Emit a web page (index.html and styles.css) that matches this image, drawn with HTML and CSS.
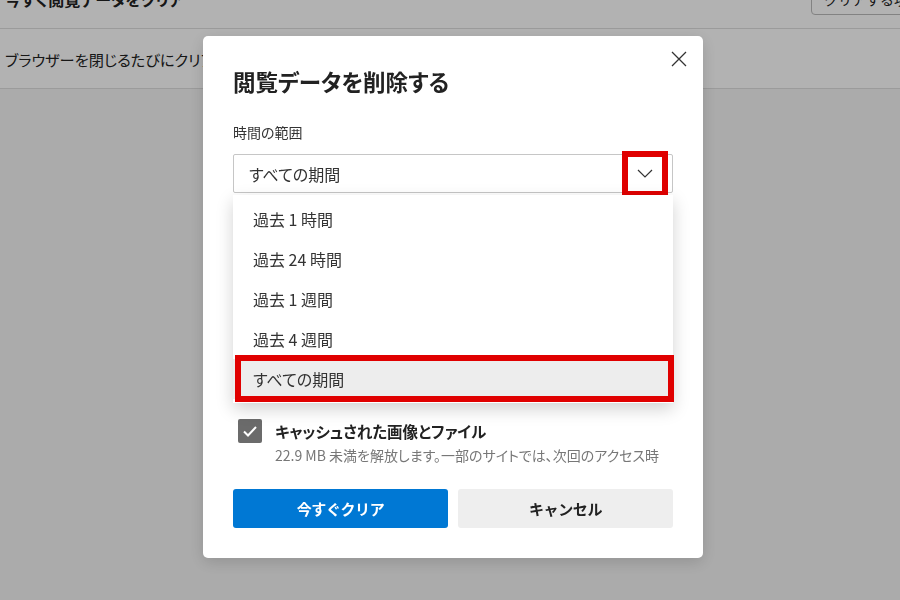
FILE: index.html
```html
<!DOCTYPE html>
<html lang="ja">
<head>
  <meta charset="UTF-8" />
  <meta name="viewport" content="width=device-width, initial-scale=1.0"/>
  <title>閲覧データを削除する</title>
  <link rel="stylesheet" href="styles.css">
</head>
<body>
  <!-- 設定ページ（背景） -->
  <div class="page">
    <div class="row row-head">
      <span class="row-title">今すぐ閲覧データをクリア</span>
      <button class="row-btn">クリアする項目を選択</button>
    </div>
    <div class="row">
      <span class="row-text">ブラウザーを閉じるたびにクリアするデータを選択する</span>
    </div>
  </div>

  <!-- ダイアログ -->
  <div class="overlay">
    <div class="dialog">
      <button class="close" aria-label="閉じる">
        <svg width="16" height="16" viewBox="0 0 16 16">
          <path d="M1 1 L15 15 M15 1 L1 15" stroke="#333" stroke-width="1.3" fill="none"/>
        </svg>
      </button>
      <h2 class="title">閲覧データを削除する</h2>

      <div class="label">時間の範囲</div>
      <div class="select-wrap">
        <div class="select">
          <span class="select-value">すべての期間</span>
          <span class="arrow">
            <svg width="16" height="9" viewBox="0 0 16 9">
              <path d="M1 1 L8 8 L15 1" stroke="#333" stroke-width="1.2" fill="none"/>
            </svg>
          </span>
        </div>
        <ul class="menu">
          <li>過去 1 時間</li>
          <li>過去 24 時間</li>
          <li>過去 1 週間</li>
          <li>過去 4 週間</li>
          <li class="selected">すべての期間</li>
        </ul>
      </div>

      <div class="options">
        <div class="option">
          <span class="check"><svg width="24" height="24" viewBox="0 0 24 24"><path d="M6 12.5 L10 16.5 L18 8" stroke="#fff" stroke-width="2" fill="none"/></svg></span>
          <div class="option-text">
            <div class="option-name">閲覧の履歴</div>
            <div class="option-desc">なし</div>
          </div>
        </div>
        <div class="option">
          <span class="check"><svg width="24" height="24" viewBox="0 0 24 24"><path d="M6 12.5 L10 16.5 L18 8" stroke="#fff" stroke-width="2" fill="none"/></svg></span>
          <div class="option-text">
            <div class="option-name">ダウンロードの履歴</div>
            <div class="option-desc">なし</div>
          </div>
        </div>
        <div class="option">
          <span class="check"><svg width="24" height="24" viewBox="0 0 24 24"><path d="M6 12.5 L10 16.5 L18 8" stroke="#fff" stroke-width="2" fill="none"/></svg></span>
          <div class="option-text">
            <div class="option-name">Cookie およびその他のサイト データ</div>
            <div class="option-desc">3 個のサイトから</div>
          </div>
        </div>
        <div class="option">
          <span class="check"><svg width="24" height="24" viewBox="0 0 24 24"><path d="M6 12.5 L10 16.5 L18 8" stroke="#fff" stroke-width="2" fill="none"/></svg></span>
          <div class="option-text">
            <div class="option-name">キャッシュされた画像とファイル</div>
            <div class="option-desc">22.9 MB 未満を解放します。一部のサイトでは、次回のアクセス時に読み込みが遅くなる可能性があります。</div>
          </div>
        </div>
      </div>

      <div class="buttons">
        <button class="btn btn-primary">今すぐクリア</button>
        <button class="btn btn-cancel">キャンセル</button>
      </div>
    </div>
  </div>
</body>
</html>
```

FILE: styles.css
```css
* {
  box-sizing: border-box;
}
html, body {
  margin: 0;
  height: 100%;
  overflow: hidden;
  background: #f5f5f5;
  font-family: "Noto Sans CJK JP", "Noto Sans", sans-serif;
  font-feature-settings: "palt";
  color: #222;
}

/* 背景の設定ページ */
.page {
  margin-top: -31px;
  background: #fff;
  overflow: hidden;
}
.row {
  display: flex;
  align-items: center;
  justify-content: space-between;
  height: 60px;
  padding: 0 5px;
  border-bottom: 1px solid #dedede;
}
.row-title {
  font-size: 16px;
  font-weight: 700;
}
.row-text {
  font-size: 15.2px;
}
.row-btn {
  flex-shrink: 0;
  margin-right: -82px;
  height: 32px;
  padding: 0 12px;
  background: #fff;
  border: 1px solid #bbb;
  border-radius: 4px;
  font-family: inherit;
  font-size: 14px;
  color: #222;
}

/* オーバーレイ */
.overlay {
  position: fixed;
  inset: 0;
  background: rgba(0, 0, 0, 0.3);
  display: flex;
  align-items: flex-start;
  padding: 36px 0 0 203px;
}

.dialog {
  position: relative;
  width: 500px;
  background: #fff;
  border-radius: 5px;
  padding: 30px;
  box-shadow: 0 4px 16px rgba(0, 0, 0, 0.15);
}

.close {
  position: absolute;
  top: 11px;
  right: 12px;
  width: 24px;
  height: 24px;
  padding: 0;
  border: none;
  background: none;
  display: flex;
  align-items: center;
  justify-content: center;
}

.title {
  margin: 0;
  font-size: 22.5px;
  line-height: 30px;
  font-weight: 700;
  color: #222;
}

.label {
  margin-top: 26px;
  font-size: 14px;
  line-height: 20px;
  color: #333;
}

.select-wrap {
  position: relative;
  margin-top: 12px;
}
.select {
  display: flex;
  align-items: center;
  justify-content: space-between;
  height: 39px;
  padding-left: 15px;
  border: 1px solid #c6c6c6;
  border-radius: 2px;
}
.select-value {
  font-size: 16px;
  color: #333;
}
.arrow {
  position: relative;
  width: 34px;
  height: 34px;
  margin-right: 10px;
  display: flex;
  align-items: center;
  justify-content: center;
}
.arrow::after {
  content: "";
  position: absolute;
  inset: -6px;
  border: 6px solid #e00000;
}

.menu {
  position: absolute;
  top: 41px;
  left: 0;
  right: 0;
  z-index: 2;
  list-style: none;
  margin: 0;
  padding: 4px 0 4px;
  background: #fff;
  box-shadow: 0 6px 16px rgba(0, 0, 0, 0.18);
}
.menu li {
  position: relative;
  height: 40px;
  line-height: 40px;
  padding-left: 20px;
  font-size: 16px;
  color: #333;
}
.menu li.selected {
  background: #ededed;
}
.menu li.selected::after {
  content: "";
  position: absolute;
  top: -4px;
  bottom: -3px;
  left: 2px;
  right: -1px;
  border: 6px solid #e00000;
}

/* チェックボックス */
.options {
  margin-top: 46px;
  height: 226px;
  overflow: hidden;
  display: flex;
  flex-direction: column;
  gap: 14px;
}
.option {
  display: flex;
  gap: 13px;
  padding-left: 5px;
}
.check {
  flex-shrink: 0;
  width: 24px;
  height: 24px;
  border-radius: 2px;
  background: #6b6b6b;
  display: flex;
}
.option-text {
  min-width: 0;
  flex: 1;
  padding-right: 10px;
}
.option-name {
  font-size: 15.5px;
  line-height: 24px;
  font-weight: 700;
  color: #222;
}
.option-desc {
  margin-top: 2px;
  font-size: 14px;
  line-height: 20px;
  color: #777;
}

.buttons {
  display: flex;
  gap: 10px;
  margin-top: 24px;
}
.btn {
  flex: 1;
  height: 39px;
  border: none;
  border-radius: 3px;
  font-family: inherit;
  font-size: 15px;
  letter-spacing: -0.4px;
  font-weight: 700;
  cursor: pointer;
}
.btn-primary {
  background: #0078d4;
  color: #fff;
}
.btn-cancel {
  background: #eeeeee;
  color: #222;
}
```
